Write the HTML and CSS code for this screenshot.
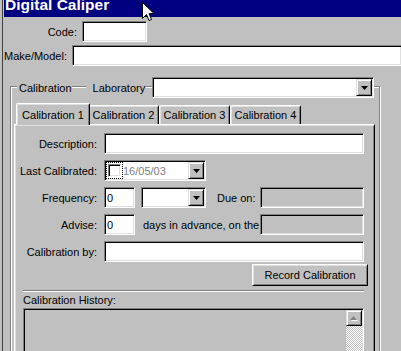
FILE: index.html
```html
<!DOCTYPE html>
<html lang="en">
<head>
    <meta charset="UTF-8">
    <meta name="viewport" content="width=device-width, initial-scale=1.0">
    <title>Digital Caliper</title>
    <link rel="stylesheet" href="styles.css">
</head>
<body>
    <div class="window">
        <div class="titlebar">Digital Caliper</div>

        <div class="top-fields">
            <div class="frow">
                <span class="lbl">Code:</span>
                <div class="field code"></div>
            </div>
            <div class="frow">
                <span class="lbl">Make/Model:</span>
                <div class="field make"></div>
            </div>
        </div>

        <div class="group">
            <div class="group-head">
                <span class="legend">Calibration</span>
                <span class="lab-label">Laboratory</span>
                <div class="field combo lab">
                    <div class="drop-btn"><svg width="7" height="4" viewBox="0 0 7 4"><path d="M0 0H7L3.5 4Z" fill="#000"/></svg></div>
                </div>
            </div>

            <div class="tabs">
                <div class="tab active">Calibration 1</div>
                <div class="tab">Calibration 2</div>
                <div class="tab">Calibration 3</div>
                <div class="tab">Calibration 4</div>
            </div>

            <div class="panel">
                <div class="prow">
                    <span class="plbl">Description:</span>
                    <div class="field wide"></div>
                </div>
                <div class="prow">
                    <span class="plbl">Last Calibrated:</span>
                    <div class="field combo datepick">
                        <span class="focus"><span class="check"></span></span>
                        <span class="date">16/05/03</span>
                        <div class="drop-btn"><svg width="7" height="4" viewBox="0 0 7 4"><path d="M0 0H7L3.5 4Z" fill="#000"/></svg></div>
                    </div>
                </div>
                <div class="prow">
                    <span class="plbl">Frequency:</span>
                    <div class="field num">0</div>
                    <div class="field combo freq">
                        <div class="drop-btn"><svg width="7" height="4" viewBox="0 0 7 4"><path d="M0 0H7L3.5 4Z" fill="#000"/></svg></div>
                    </div>
                    <span class="due-lbl">Due on:</span>
                    <div class="field disabled sidebox"></div>
                </div>
                <div class="prow">
                    <span class="plbl">Advise:</span>
                    <div class="field num">0</div>
                    <span class="adv-text">days in advance, on the</span>
                    <div class="field disabled sidebox"></div>
                </div>
                <div class="prow last">
                    <span class="plbl">Calibration by:</span>
                    <div class="field wide"></div>
                </div>
                <div class="btn-row">
                    <div class="btn">Record Calibration</div>
                </div>
                <div class="sep"></div>
                <div class="hist-lbl">Calibration History:</div>
                <div class="listbox">
                    <div class="scrollbar">
                        <div class="scroll-btn"><svg width="8" height="5" viewBox="0 0 8 5"><path d="M4.5 1L8 5H1Z" fill="#fff"/><path d="M3.5 0L7 4H0Z" fill="#808080"/></svg></div>
                        <div class="track"></div>
                    </div>
                </div>
            </div>
        </div>
    </div>

    <svg class="cursor" width="13" height="20" viewBox="0 0 13 20"><path d="M0.5 0.5V16.5L4.5 12.5L7 18.5L9.5 17.5L7 11.5H12Z" fill="#fff" stroke="#000"/></svg>
</body>
</html>
```

FILE: styles.css
```css
body {
    margin: 0;
    height: 351px;
    overflow: hidden;
    background-color: #c0c0c0;
    font-family: "Liberation Sans", Arial, sans-serif;
    font-size: 11px;
    color: #000;
}
.window {
    height: 351px;
    margin-left: 2px;
    padding-left: 1px;
    border-left: 1px solid #404040;
}
.titlebar {
    height: 17px;
    padding-left: 1px;
    background-color: #000080;
    color: #fff;
    font-size: 15.5px;
    font-weight: bold;
    line-height: 10px;
    white-space: nowrap;
    overflow: hidden;
}

/* sunken edit box */
.field {
    box-sizing: border-box;
    flex: none;
    display: flex;
    align-items: center;
    height: 21px;
    padding: 0 2px;
    background-color: #fff;
    border: 1px solid;
    border-color: #808080 #fff #fff #808080;
    box-shadow: inset 1px 1px #000, inset -1px -1px #dfdfdf;
}
.field.disabled {
    background-color: #c0c0c0;
}
.combo {
    padding: 1px;
}
.drop-btn {
    box-sizing: border-box;
    width: 16px;
    height: 17px;
    margin-left: auto;
    display: flex;
    align-items: center;
    justify-content: center;
    background-color: #c0c0c0;
    border: 1px solid;
    border-color: #dfdfdf #000 #000 #dfdfdf;
    box-shadow: inset 1px 1px #fff, inset -1px -1px #808080;
}

.top-fields {
    padding-top: 4px;
}
.frow {
    display: flex;
    align-items: center;
    height: 21px;
    margin-bottom: 3px;
}
.frow .lbl {
    width: 73px;
    margin-right: 5px;
    text-align: right;
}
.code {
    width: 65px;
}
.make {
    width: 330px;
}

/* Calibration group box */
.group {
    box-sizing: border-box;
    width: 370px;
    height: 300px;
    margin: 20px 0 0 6px;
    padding: 0 4px 0 3px;
    border: 1px solid #808080;
    box-shadow: inset 1px 1px #fff, 1px 1px #fff;
}
.group-head {
    display: flex;
    align-items: center;
    height: 21px;
    margin: -10px 0 5px;
}
.legend {
    margin-left: 3px;
    padding-left: 2px;
    background-color: #c0c0c0;
}
.lab-label {
    margin: 0 6px 0 14px;
    padding: 0 1px 0 7px;
    background-color: #c0c0c0;
}
.lab {
    width: 222px;
}

.tabs {
    display: flex;
    align-items: flex-end;
    height: 21px;
    padding-left: 4px;
}
.tab {
    box-sizing: border-box;
    width: 71px;
    height: 19px;
    display: flex;
    align-items: center;
    justify-content: center;
    white-space: nowrap;
    border-top: 1px solid #fff;
    border-left: 1px solid #fff;
    border-right: 1px solid #000;
    border-radius: 2px 2px 0 0;
    box-shadow: inset 1px 1px #dfdfdf, inset -1px 0 #808080;
}
.tab.active {
    width: 74px;
    height: 22px;
    margin: 0 -2px -1px;
    position: relative;
    z-index: 1;
    background-color: #c0c0c0;
}

.panel {
    box-sizing: border-box;
    height: 240px;
    padding: 8px 10px 0 0;
    border-top: 1px solid #fff;
    border-left: 1px solid #fff;
    border-right: 1px solid #000;
    box-shadow: inset 1px 1px #dfdfdf, inset -1px 0 #808080;
}
.prow {
    display: flex;
    align-items: center;
    height: 21px;
    margin-bottom: 6px;
    white-space: nowrap;
}
.prow.last {
    margin-bottom: 2px;
}
.plbl {
    flex: none;
    width: 82px;
    margin-right: 7px;
    text-align: right;
}
.wide {
    width: 260px;
}
.num {
    width: 31px;
}
.datepick {
    width: 102px;
}
.focus {
    display: flex;
    padding: 1px;
    border: 1px dotted #000;
}
.check {
    box-sizing: border-box;
    width: 13px;
    height: 13px;
    background-color: #fff;
    border: 1px solid;
    border-color: #808080 #fff #fff #808080;
    box-shadow: inset 1px 1px #000, inset -1px -1px #dfdfdf;
}
.date {
    color: #808080;
}
.freq {
    width: 65px;
    margin-left: 6px;
}
.due-lbl {
    margin-left: 11px;
}
.adv-text {
    margin-left: 8px;
}
.sidebox {
    width: 104px;
    margin-left: auto;
}

.btn-row {
    display: flex;
    justify-content: flex-end;
    margin-right: -4px;
}
.btn {
    box-sizing: border-box;
    width: 116px;
    height: 22px;
    display: flex;
    align-items: center;
    justify-content: center;
    border: 1px solid;
    border-color: #fff #000 #000 #fff;
    box-shadow: inset 1px 1px #dfdfdf, inset -1px -1px #808080;
}
.sep {
    margin: 4px 0 0 8px;
    border-top: 1px solid #808080;
    border-bottom: 1px solid #fff;
}
.hist-lbl {
    margin: 2px 0 0 8px;
    line-height: 13px;
}
.listbox {
    box-sizing: border-box;
    height: 80px;
    margin: 1px 0 0 8px;
    padding: 1px;
    display: flex;
    justify-content: flex-end;
    border: 1px solid;
    border-color: #808080 #fff #fff #808080;
    box-shadow: inset 1px 1px #000, inset -1px -1px #dfdfdf;
}
.scrollbar {
    width: 16px;
    display: flex;
    flex-direction: column;
}
.scroll-btn {
    box-sizing: border-box;
    height: 16px;
    display: flex;
    align-items: center;
    justify-content: center;
    border: 1px solid;
    border-color: #dfdfdf #000 #000 #dfdfdf;
    box-shadow: inset 1px 1px #fff, inset -1px -1px #808080;
}
.track {
    flex: 1;
    background-image: repeating-conic-gradient(#fff 0 25%, #c0c0c0 0 50%);
    background-size: 2px 2px;
}

.cursor {
    position: absolute;
    left: 142px;
    top: 2px;
}
```
